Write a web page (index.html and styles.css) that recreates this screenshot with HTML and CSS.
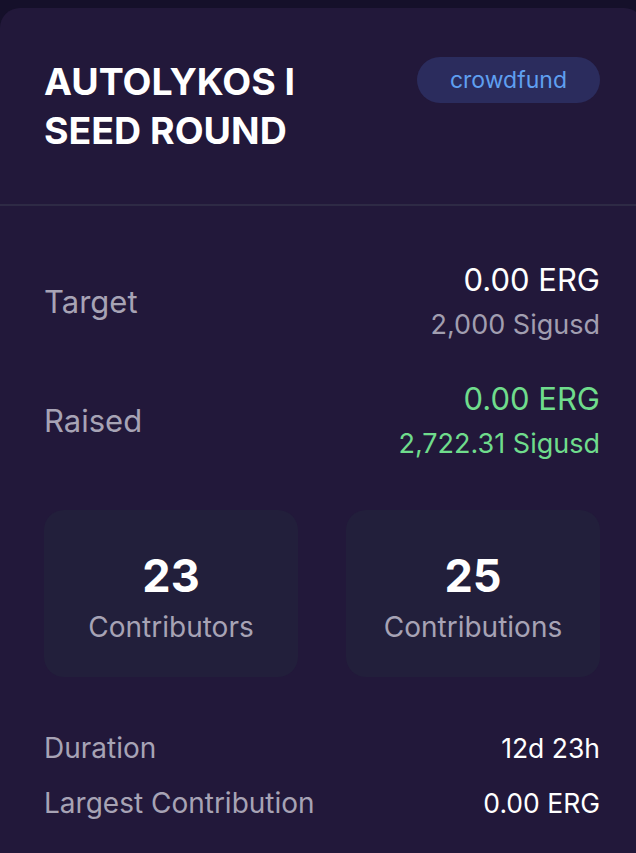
FILE: index.html
```html
<!DOCTYPE html>
<html lang="en">
<head>
    <meta charset="UTF-8">
    <meta name="viewport" content="width=device-width, initial-scale=1.0">
    <title>Autolykos I Seed Round</title>
    <link rel="stylesheet" href="styles.css">
</head>
<body>
    <div class="card">
        <div class="card-header">
            <h1 class="title">AUTOLYKOS I<br>SEED ROUND</h1>
            <span class="badge">crowdfund</span>
        </div>

        <div class="card-body">
            <div class="amount-row">
                <span class="label">Target</span>
                <div class="amount">
                    <p class="amount-main">0.00 ERG</p>
                    <p class="amount-sub">2,000 Sigusd</p>
                </div>
            </div>
            <div class="amount-row raised">
                <span class="label">Raised</span>
                <div class="amount">
                    <p class="amount-main">0.00 ERG</p>
                    <p class="amount-sub">2,722.31 Sigusd</p>
                </div>
            </div>

            <div class="stats">
                <div class="stat-box">
                    <p class="stat-number">23</p>
                    <p class="stat-label">Contributors</p>
                </div>
                <div class="stat-box">
                    <p class="stat-number">25</p>
                    <p class="stat-label">Contributions</p>
                </div>
            </div>

            <div class="info-row">
                <span class="info-label">Duration</span>
                <span class="info-value">12d 23h</span>
            </div>
            <div class="info-row">
                <span class="info-label">Largest Contribution</span>
                <span class="info-value">0.00 ERG</span>
            </div>
        </div>
    </div>
</body>
</html>
```

FILE: styles.css
```css
body {
    margin: 0;
    padding-top: 8px;
    background: #15102a;
    font-family: 'Inter', 'Noto Sans', sans-serif;
    color: #fff;
    overflow: hidden;
}
p {
    margin: 0;
}
.card {
    width: 644px;
    min-height: 845px;
    background: #22183a;
    border-radius: 20px 20px 0 0;
}
.card-header {
    display: flex;
    justify-content: space-between;
    align-items: flex-start;
    padding: 49px 44px;
    border-bottom: 2px solid #2e2a45;
}
.title {
    margin: 0;
    font-size: 37.5px;
    line-height: 49px;
    font-weight: 700;
}
.badge {
    height: 46px;
    line-height: 46px;
    padding: 0 33px;
    border-radius: 23px;
    background: #2b2c5d;
    color: #5f9ff0;
    font-size: 23px;
}
.card-body {
    padding: 52px 44px 0 44px;
}
.amount-row {
    display: flex;
    justify-content: space-between;
    align-items: center;
}
.amount-row.raised {
    margin-top: 33px;
}
.label {
    font-size: 31px;
    color: #a7a3b5;
}
.amount {
    text-align: right;
}
.amount-main {
    font-size: 31px;
    line-height: 44px;
}
.amount-sub {
    margin-top: 4px;
    font-size: 27px;
    line-height: 38px;
    color: #a19eb0;
}
.raised .amount-main,
.raised .amount-sub {
    color: #6fdc8c;
}
.stats {
    display: grid;
    grid-template-columns: 1fr 1fr;
    gap: 48px;
    margin-top: 47px;
}
.stat-box {
    height: 167px;
    box-sizing: border-box;
    padding-top: 40px;
    border-radius: 20px;
    background: #221f3b;
    text-align: center;
}
.stat-number {
    font-size: 45px;
    line-height: 52px;
    font-weight: 700;
}
.stat-label {
    margin-top: 7px;
    font-size: 28px;
    line-height: 36px;
    color: #a7a3b5;
}
.info-row {
    display: flex;
    justify-content: space-between;
    margin-top: 19px;
    font-size: 28px;
    line-height: 36px;
}
.stats + .info-row {
    margin-top: 53px;
}
.info-label {
    color: #a7a3b5;
}
.info-value {
    font-size: 26.5px;
}
```
